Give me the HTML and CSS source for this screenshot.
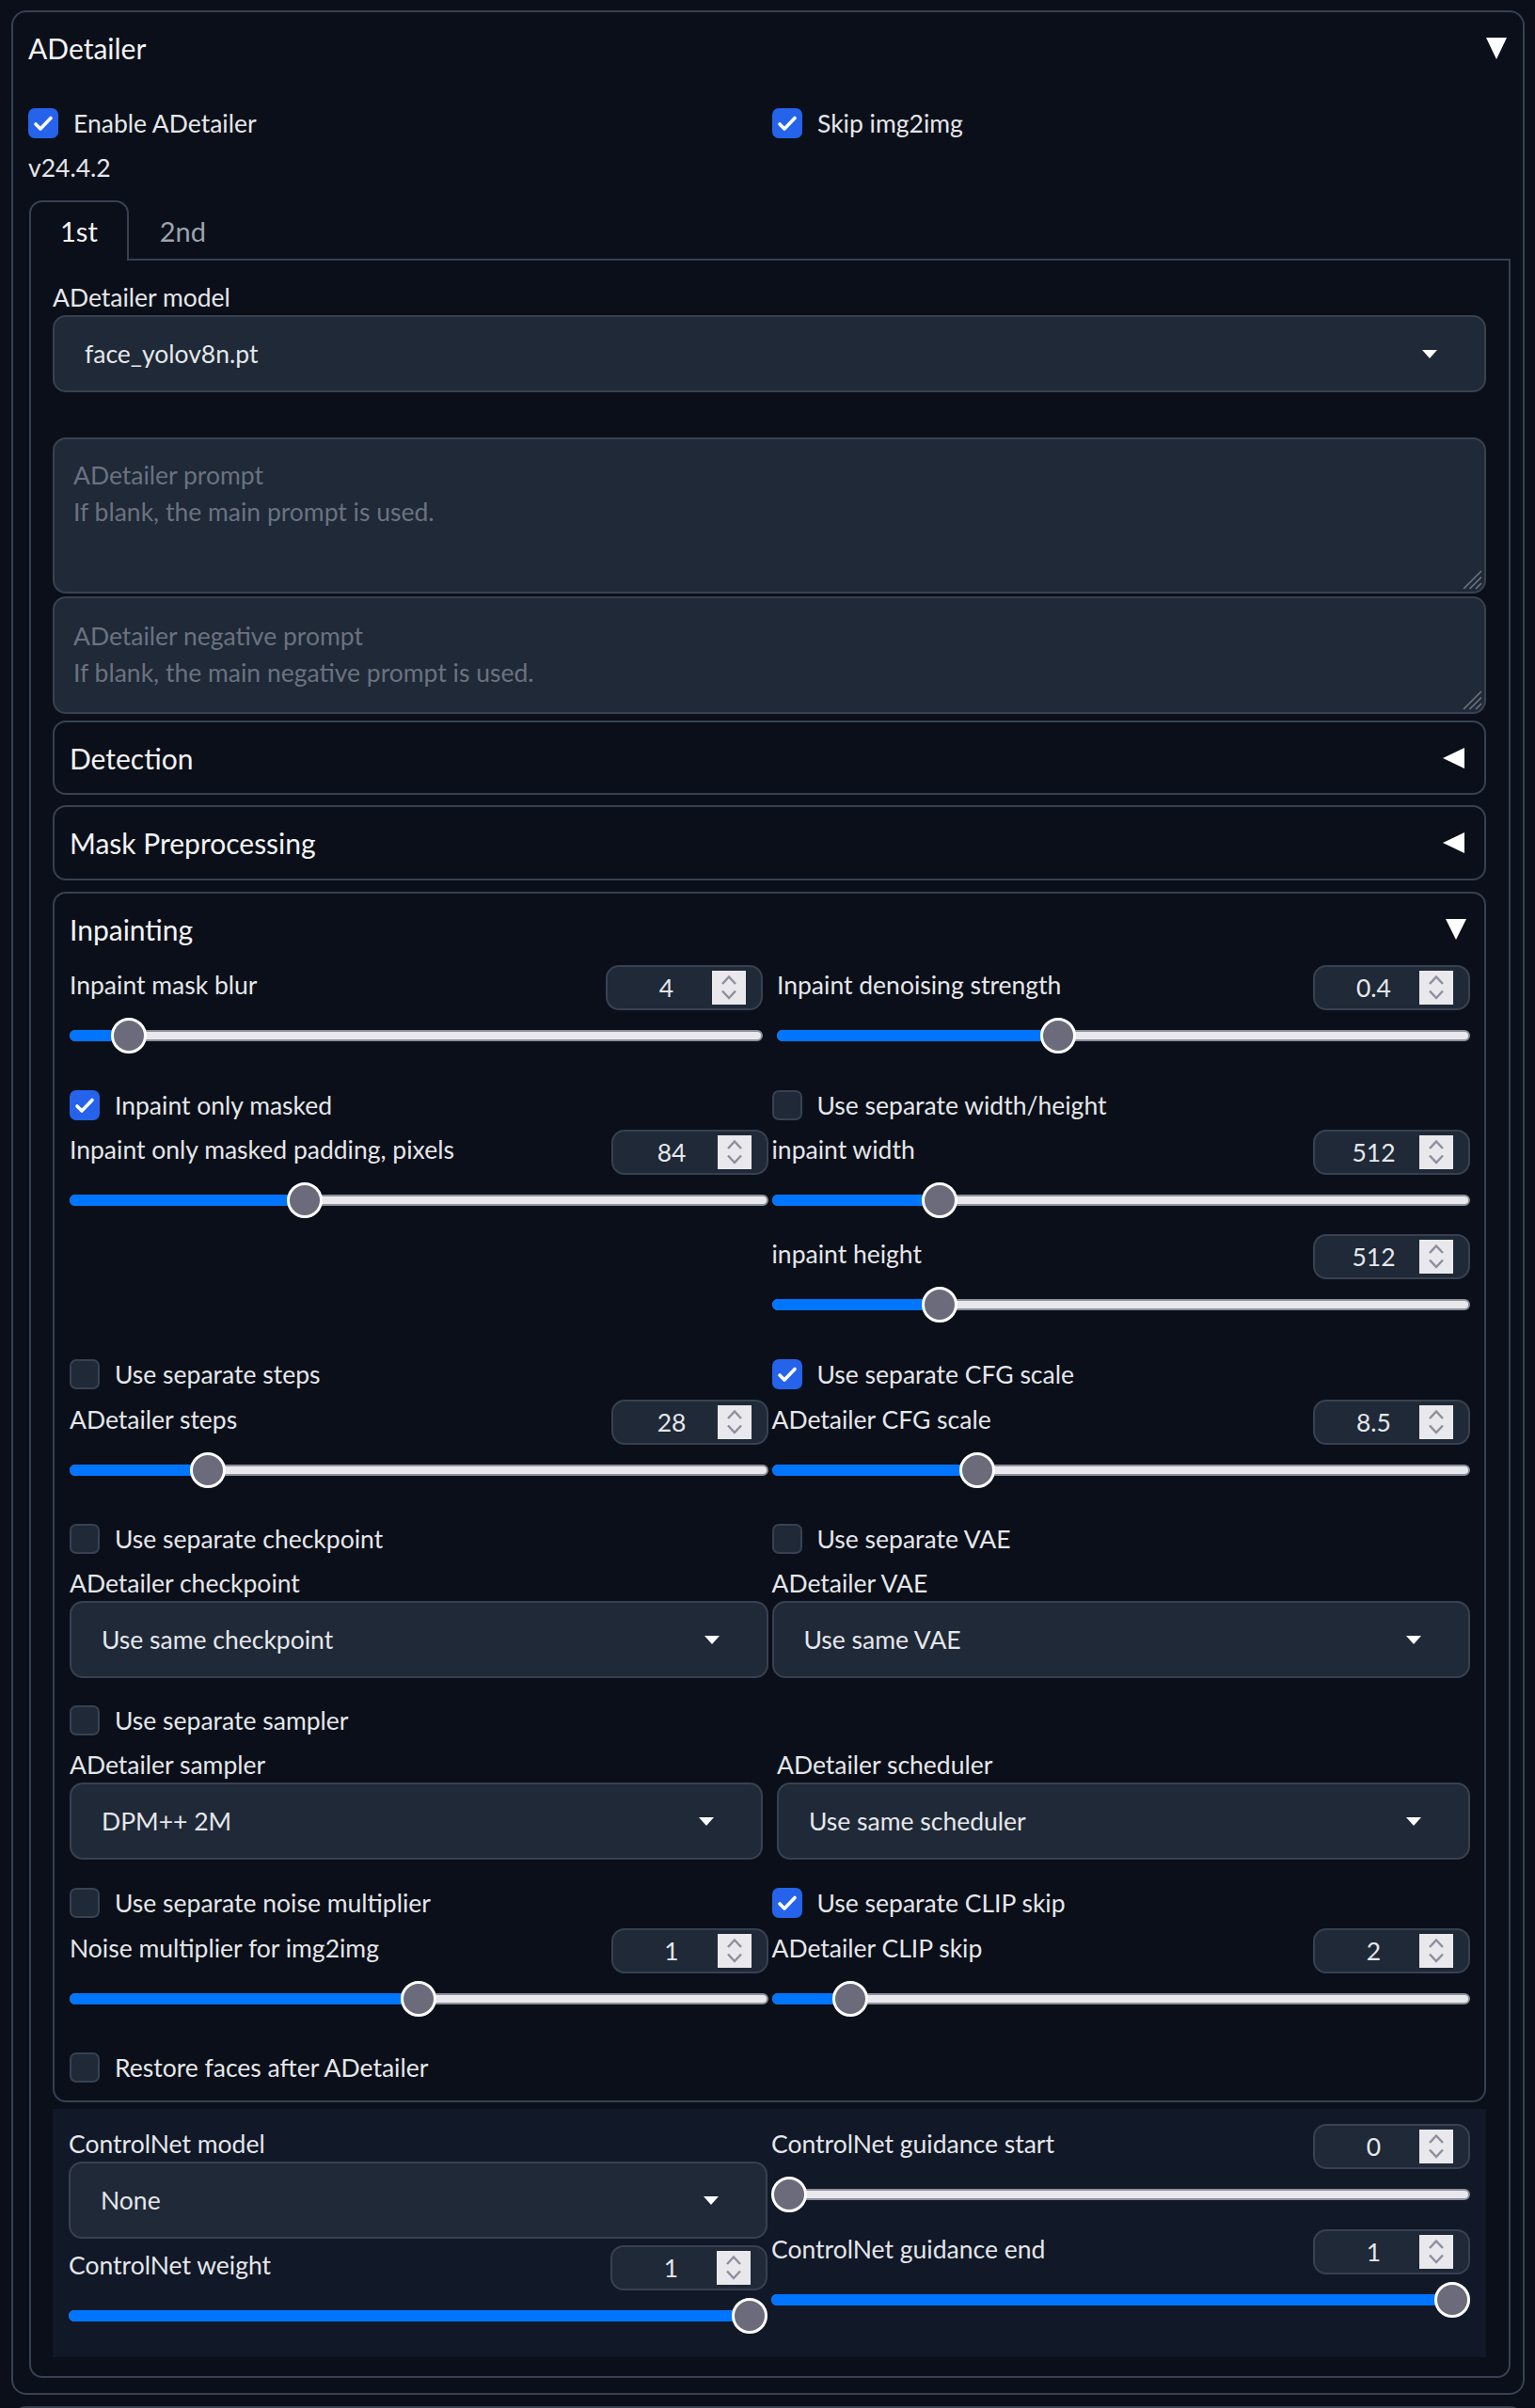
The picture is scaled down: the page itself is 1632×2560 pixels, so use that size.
FILE: index.html
```html
<!DOCTYPE html>
<html lang="en">
<head>
<meta charset="utf-8">
<title>ADetailer</title>
<link rel="stylesheet" href="styles.css">
</head>
<body>
<div class="panel">
  <div class="panel-head">
    <span class="panel-title">ADetailer</span>
    <svg class="tri" width="22" height="23" viewBox="0 0 22 23"><polygon points="0,0 22,0 11,23"/></svg>
  </div>
  <div class="cols top-checks">
    <label class="check"><span class="box on"><svg viewBox="0 0 28 28" width="28" height="28"><path d="M6 15 11 20 22 8.5"/></svg></span><span>Enable ADetailer</span></label>
    <label class="check"><span class="box on"><svg viewBox="0 0 28 28" width="28" height="28"><path d="M6 15 11 20 22 8.5"/></svg></span><span>Skip img2img</span></label>
  </div>
  <div class="version">v24.4.2</div>

  <div class="tabs">
    <div class="tab-nav">
      <button class="tab active">1st</button>
      <button class="tab">2nd</button>
    </div>
    <div class="tab-body">
      <div class="field-label">ADetailer model</div>
      <div class="dropdown"><span>face_yolov8n.pt</span><svg class="caret" width="16" height="9" viewBox="0 0 16 9"><polygon points="0,0 16,0 8,9"/></svg></div>

      <div class="ta-wrap p1">
        <textarea class="prompt" placeholder="ADetailer prompt&#10;If blank, the main prompt is used."></textarea>
        <svg class="grip" width="24" height="24" viewBox="0 0 24 24"><path d="M22 3 3 22M22 9.5 9.5 22M22 16 16 22"/></svg>
      </div>
      <div class="ta-wrap p2">
        <textarea class="prompt" placeholder="ADetailer negative prompt&#10;If blank, the main negative prompt is used."></textarea>
        <svg class="grip" width="24" height="24" viewBox="0 0 24 24"><path d="M22 3 3 22M22 9.5 9.5 22M22 16 16 22"/></svg>
      </div>

      <div class="acc closed acc-det"><span class="acc-title">Detection</span><svg class="tri" width="23" height="22" viewBox="0 0 23 22"><polygon points="23,0 23,22 0,11"/></svg></div>
      <div class="acc closed acc-mask"><span class="acc-title">Mask Preprocessing</span><svg class="tri" width="23" height="22" viewBox="0 0 23 22"><polygon points="23,0 23,22 0,11"/></svg></div>

      <div class="acc open acc-inp">
        <div class="acc-head"><span class="acc-title">Inpainting</span><svg class="tri" width="22" height="22" viewBox="0 0 22 22"><polygon points="0,0 22,0 11,22"/></svg></div>

        <div class="row wide">
          <div class="slider">
            <div class="slider-head"><span class="slabel">Inpaint mask blur</span><div class="numbox"><input type="number" value="4"><svg class="spin" width="36" height="36" viewBox="0 0 36 36"><rect width="36" height="36"/><path d="M11 14 18 6.5 25 14M11 21.5 18 29 25 21.5"/></svg></div></div>
            <div class="range" style="--p:0.0625"><div class="track"></div><div class="fill"></div><span class="thumb"></span></div>
          </div>
          <div class="slider">
            <div class="slider-head"><span class="slabel">Inpaint denoising strength</span><div class="numbox"><input type="number" value="0.4"><svg class="spin" width="36" height="36" viewBox="0 0 36 36"><rect width="36" height="36"/><path d="M11 14 18 6.5 25 14M11 21.5 18 29 25 21.5"/></svg></div></div>
            <div class="range" style="--p:0.4"><div class="track"></div><div class="fill"></div><span class="thumb"></span></div>
          </div>
        </div>

        <div class="row grp g2">
          <div class="col">
            <label class="check"><span class="box on"><svg viewBox="0 0 28 28" width="28" height="28"><path d="M6 15 11 20 22 8.5"/></svg></span><span>Inpaint only masked</span></label>
            <div class="slider after-check">
              <div class="slider-head"><span class="slabel">Inpaint only masked padding, pixels</span><div class="numbox"><input type="number" value="84"><svg class="spin" width="36" height="36" viewBox="0 0 36 36"><rect width="36" height="36"/><path d="M11 14 18 6.5 25 14M11 21.5 18 29 25 21.5"/></svg></div></div>
              <div class="range" style="--p:0.328"><div class="track"></div><div class="fill"></div><span class="thumb"></span></div>
            </div>
          </div>
          <div class="col">
            <label class="check"><span class="box"></span><span>Use separate width/height</span></label>
            <div class="slider after-check">
              <div class="slider-head"><span class="slabel">inpaint width</span><div class="numbox"><input type="number" value="512"><svg class="spin" width="36" height="36" viewBox="0 0 36 36"><rect width="36" height="36"/><path d="M11 14 18 6.5 25 14M11 21.5 18 29 25 21.5"/></svg></div></div>
              <div class="range" style="--p:0.2258"><div class="track"></div><div class="fill"></div><span class="thumb"></span></div>
            </div>
            <div class="slider next-slider">
              <div class="slider-head"><span class="slabel">inpaint height</span><div class="numbox"><input type="number" value="512"><svg class="spin" width="36" height="36" viewBox="0 0 36 36"><rect width="36" height="36"/><path d="M11 14 18 6.5 25 14M11 21.5 18 29 25 21.5"/></svg></div></div>
              <div class="range" style="--p:0.2258"><div class="track"></div><div class="fill"></div><span class="thumb"></span></div>
            </div>
          </div>
        </div>

        <div class="row grp g3">
          <div class="col">
            <label class="check"><span class="box"></span><span>Use separate steps</span></label>
            <div class="slider after-check2">
              <div class="slider-head"><span class="slabel">ADetailer steps</span><div class="numbox"><input type="number" value="28"><svg class="spin" width="36" height="36" viewBox="0 0 36 36"><rect width="36" height="36"/><path d="M11 14 18 6.5 25 14M11 21.5 18 29 25 21.5"/></svg></div></div>
              <div class="range" style="--p:0.1812"><div class="track"></div><div class="fill"></div><span class="thumb"></span></div>
            </div>
          </div>
          <div class="col">
            <label class="check"><span class="box on"><svg viewBox="0 0 28 28" width="28" height="28"><path d="M6 15 11 20 22 8.5"/></svg></span><span>Use separate CFG scale</span></label>
            <div class="slider after-check2">
              <div class="slider-head"><span class="slabel">ADetailer CFG scale</span><div class="numbox"><input type="number" value="8.5"><svg class="spin" width="36" height="36" viewBox="0 0 36 36"><rect width="36" height="36"/><path d="M11 14 18 6.5 25 14M11 21.5 18 29 25 21.5"/></svg></div></div>
              <div class="range" style="--p:0.2833"><div class="track"></div><div class="fill"></div><span class="thumb"></span></div>
            </div>
          </div>
        </div>

        <div class="row grp g4">
          <div class="col">
            <label class="check"><span class="box"></span><span>Use separate checkpoint</span></label>
            <div class="field-label after-check3">ADetailer checkpoint</div>
            <div class="dropdown"><span>Use same checkpoint</span><svg class="caret" width="16" height="9" viewBox="0 0 16 9"><polygon points="0,0 16,0 8,9"/></svg></div>
          </div>
          <div class="col">
            <label class="check"><span class="box"></span><span>Use separate VAE</span></label>
            <div class="field-label after-check3">ADetailer VAE</div>
            <div class="dropdown"><span>Use same VAE</span><svg class="caret" width="16" height="9" viewBox="0 0 16 9"><polygon points="0,0 16,0 8,9"/></svg></div>
          </div>
        </div>

        <div class="grp g5">
          <label class="check"><span class="box"></span><span>Use separate sampler</span></label>
        </div>
        <div class="row wide g5b">
          <div class="col">
            <div class="field-label">ADetailer sampler</div>
            <div class="dropdown"><span>DPM++ 2M</span><svg class="caret" width="16" height="9" viewBox="0 0 16 9"><polygon points="0,0 16,0 8,9"/></svg></div>
          </div>
          <div class="col">
            <div class="field-label">ADetailer scheduler</div>
            <div class="dropdown"><span>Use same scheduler</span><svg class="caret" width="16" height="9" viewBox="0 0 16 9"><polygon points="0,0 16,0 8,9"/></svg></div>
          </div>
        </div>

        <div class="row grp g6">
          <div class="col">
            <label class="check"><span class="box"></span><span>Use separate noise multiplier</span></label>
            <div class="slider after-check2">
              <div class="slider-head"><span class="slabel">Noise multiplier for img2img</span><div class="numbox"><input type="number" value="1"><svg class="spin" width="36" height="36" viewBox="0 0 36 36"><rect width="36" height="36"/><path d="M11 14 18 6.5 25 14M11 21.5 18 29 25 21.5"/></svg></div></div>
              <div class="range" style="--p:0.5"><div class="track"></div><div class="fill"></div><span class="thumb"></span></div>
            </div>
          </div>
          <div class="col">
            <label class="check"><span class="box on"><svg viewBox="0 0 28 28" width="28" height="28"><path d="M6 15 11 20 22 8.5"/></svg></span><span>Use separate CLIP skip</span></label>
            <div class="slider after-check2">
              <div class="slider-head"><span class="slabel">ADetailer CLIP skip</span><div class="numbox"><input type="number" value="2"><svg class="spin" width="36" height="36" viewBox="0 0 36 36"><rect width="36" height="36"/><path d="M11 14 18 6.5 25 14M11 21.5 18 29 25 21.5"/></svg></div></div>
              <div class="range" style="--p:0.0909"><div class="track"></div><div class="fill"></div><span class="thumb"></span></div>
            </div>
          </div>
        </div>

        <div class="grp g7">
          <label class="check"><span class="box"></span><span>Restore faces after ADetailer</span></label>
        </div>
      </div>

      <div class="cn">
        <div class="col">
          <div class="field-label cn-label">ControlNet model</div>
          <div class="dropdown"><span>None</span><svg class="caret" width="16" height="9" viewBox="0 0 16 9"><polygon points="0,0 16,0 8,9"/></svg></div>
          <div class="slider cn-weight">
            <div class="slider-head"><span class="slabel">ControlNet weight</span><div class="numbox"><input type="number" value="1"><svg class="spin" width="36" height="36" viewBox="0 0 36 36"><rect width="36" height="36"/><path d="M11 14 18 6.5 25 14M11 21.5 18 29 25 21.5"/></svg></div></div>
            <div class="range" style="--p:1"><div class="track"></div><div class="fill"></div><span class="thumb"></span></div>
          </div>
        </div>
        <div class="col">
          <div class="slider">
            <div class="slider-head"><span class="slabel">ControlNet guidance start</span><div class="numbox"><input type="number" value="0"><svg class="spin" width="36" height="36" viewBox="0 0 36 36"><rect width="36" height="36"/><path d="M11 14 18 6.5 25 14M11 21.5 18 29 25 21.5"/></svg></div></div>
            <div class="range" style="--p:0"><div class="track"></div><div class="fill"></div><span class="thumb"></span></div>
          </div>
          <div class="slider cn-end">
            <div class="slider-head"><span class="slabel">ControlNet guidance end</span><div class="numbox"><input type="number" value="1"><svg class="spin" width="36" height="36" viewBox="0 0 36 36"><rect width="36" height="36"/><path d="M11 14 18 6.5 25 14M11 21.5 18 29 25 21.5"/></svg></div></div>
            <div class="range" style="--p:1"><div class="track"></div><div class="fill"></div><span class="thumb"></span></div>
          </div>
        </div>
      </div>
    </div>
  </div>
</div>
<div class="panel panel-next"></div>
</body>
</html>
```
FILE: styles.css
```css
* { box-sizing: border-box; }
html, body {
  margin: 0;
  background: #0b0f19;
  overflow: hidden;
}
body {
  font-family: Lato, "Noto Sans", sans-serif;
  font-size: 26.5px;
  line-height: 36px;
  color: #e5e7eb;
  color-scheme: dark;
}

.panel {
  margin: 11px 11px 0 12px;
  border: 2px solid #374151;
  border-radius: 16px;
  padding: 0 13px 16px 16px;
}
.panel-next {
  margin-top: 12px;
  height: 40px;
  border-bottom: 0;
  border-radius: 16px 16px 0 0;
}
.panel-head {
  height: 76px;
  display: flex;
  align-items: center;
  justify-content: space-between;
}
.panel-title { font-size: 30px; color: #f3f4f6; }
.tri { display: block; fill: #ffffff; flex: none; }
.panel-head .tri { margin-right: 4px; }

.cols { display: grid; grid-template-columns: 1fr 1fr; }
.top-checks { column-gap: 6px; margin-top: 26px; }

.check {
  display: flex;
  align-items: center;
  gap: 16px;
  height: 32px;
}
.box {
  flex: none;
  width: 32px;
  height: 32px;
  border-radius: 7px;
  background: #1f2937;
  border: 2px solid #374151;
  display: flex;
}
.box.on { background: #2563eb; border-color: #2563eb; }
.box svg path {
  fill: none;
  stroke: #ffffff;
  stroke-width: 3.6;
  stroke-linecap: round;
  stroke-linejoin: round;
}

.version { margin-top: 13px; line-height: 36px; }

.tabs { margin-top: 17px; margin-left: 1px; }
.tab-nav {
  display: flex;
  height: 64px;
  border-bottom: 2px solid #374151;
}
.tab {
  height: 64px;
  padding: 0 31px;
  border: 2px solid transparent;
  border-bottom: 0;
  border-radius: 14px 14px 0 0;
  background: transparent;
  color: #9ca3af;
  font-family: inherit;
  font-size: 29px;
  line-height: 60px;
}
.tab.active {
  border-color: #374151;
  background: #0b0f19;
  color: #f3f4f6;
  position: relative;
  z-index: 1;
}
.tab-body {
  border: 2px solid #374151;
  border-top: 0;
  border-radius: 0 0 14px 14px;
  padding: 21px 24px 20px 23px;
}

.field-label { height: 37px; line-height: 37px; }

.dropdown {
  height: 82px;
  border: 2px solid #374151;
  border-radius: 14px;
  background: #1f2937;
  display: flex;
  align-items: center;
  justify-content: space-between;
  padding: 0 50px 0 32px;
}
.caret { display: block; fill: #ffffff; flex: none; }

.ta-wrap { position: relative; }
.prompt {
  display: block;
  width: 100%;
  height: 100%;
  resize: none;
  background: #1f2937;
  border: 2px solid #374151;
  border-radius: 14px;
  color: #e5e7eb;
  font-family: inherit;
  font-size: 26.5px;
  line-height: 39px;
  padding: 19px 20px 0 20px;
  outline: none;
}
.prompt::placeholder { color: #6b7280; }
.p1 { margin-top: 48px; height: 166px; }
.p2 { margin-top: 3px; height: 125px; }
.p2 .prompt { padding-top: 21px; }
.grip {
  position: absolute;
  right: 3px;
  bottom: 3px;
  display: block;
}
.grip path { fill: none; stroke: #6f7480; stroke-width: 1.6; }

.acc {
  border: 2px solid #374151;
  border-radius: 14px;
}
.acc-title { font-size: 30px; color: #f3f4f6; }
.acc.closed {
  display: flex;
  align-items: center;
  justify-content: space-between;
  padding: 0 21px 0 16px;
}
.acc-det { margin-top: 7px; height: 79px; }
.acc-mask { margin-top: 11px; height: 80px; }
.acc-inp { margin-top: 12px; padding: 0 15px 19px 16px; }
.acc-head {
  height: 76px;
  display: flex;
  align-items: center;
  justify-content: space-between;
}
.acc-head .tri { margin-right: 4px; }

.row {
  display: grid;
  grid-template-columns: 1fr 1fr;
  column-gap: 4px;
  align-items: start;
}
.row.wide { column-gap: 15px; }
.col { display: flex; flex-direction: column; min-width: 0; }

.g2 { margin-top: 31px; }
.g3 { margin-top: 31px; }
.g4 { margin-top: 30px; }
.g5 { margin-top: 29px; }
.g5b { margin-top: 13px; }
.g6 { margin-top: 30px; }
.g7 { margin-top: 30px; }

.after-check { margin-top: 10px; }
.after-check2 { margin-top: 11px; }
.after-check3 { margin-top: 13px; }
.next-slider { margin-top: 9px; }

.slider-head {
  height: 48px;
  display: flex;
  align-items: center;
  justify-content: space-between;
}
.slabel { padding-bottom: 6px; white-space: nowrap; }
.numbox {
  flex: none;
  width: 167px;
  height: 48px;
  border: 2px solid #374151;
  border-radius: 14px;
  background: #1f2937;
  display: flex;
  align-items: center;
  padding: 0 16px 0 14px;
}
.numbox input {
  flex: 1;
  min-width: 0;
  background: transparent;
  border: 0;
  padding: 0;
  outline: none;
  color: #e5e7eb;
  font-family: inherit;
  font-size: 26.5px;
  text-align: center;
  -moz-appearance: textfield;
}
.numbox input::-webkit-inner-spin-button,
.numbox input::-webkit-outer-spin-button { -webkit-appearance: none; margin: 0; }
.spin { display: block; flex: none; }
.spin rect { fill: #e9e9ed; }
.spin path { fill: none; stroke: #8f8f9d; stroke-width: 2.5; }

.range { position: relative; height: 54px; }
.track {
  position: absolute;
  left: 0;
  right: 0;
  top: 21px;
  height: 12px;
  border-radius: 6px;
  background: #e9e9ed;
  border: 2px solid #8f8f9d;
}
.fill {
  position: absolute;
  left: 0;
  top: 21px;
  height: 12px;
  border-radius: 6px;
  background: #0075ff;
  width: calc(19px + (100% - 38px) * var(--p));
}
.thumb {
  position: absolute;
  top: 8px;
  left: calc((100% - 38px) * var(--p));
  width: 38px;
  height: 38px;
  border-radius: 50%;
  background: #6b6b7b;
  border: 3px solid #ffffff;
}

.cn {
  margin-top: 7px;
  background: #111827;
  padding: 16px 17px 17px 17px;
  display: grid;
  grid-template-columns: 1fr 1fr;
  column-gap: 4px;
  align-items: start;
}
.cn-label { margin-top: 3px; }
.cn-weight { margin-top: 7px; }
.cn-end { margin-top: 10px; }
```
